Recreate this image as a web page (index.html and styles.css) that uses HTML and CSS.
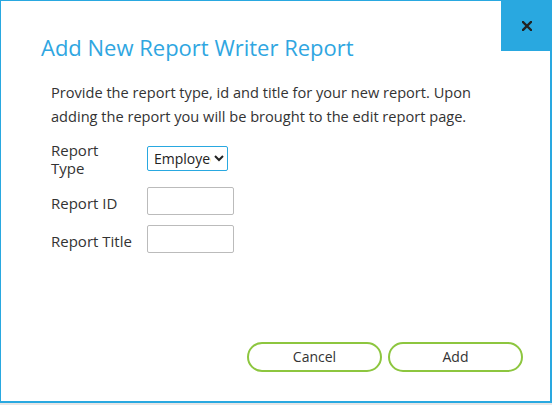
FILE: index.html
```html
<!DOCTYPE html>
<html lang="en">

<head>
    <meta charset="UTF-8">
    <title>Add New Report Writer Report</title>
    <link rel="stylesheet" href="styles.css">
</head>

<body>
    <div class="dialog">
        <a href="javascript:;" class="close">
            <svg width="10" height="10" viewBox="0 0 10 10">
                <path d="M1 1L9 9M9 1L1 9" stroke="#222" stroke-width="2.4" stroke-linecap="square" fill="none"/>
            </svg>
        </a>
        <h1 class="title">Add New Report Writer Report</h1>
        <div class="content">
            <p class="intro">Provide the report type, id and title for your new report. Upon adding the report you will be brought to the edit report page.</p>
            <div class="row row-type">
                <label class="label" for="type">Report Type</label>
                <select id="type" class="select">
                    <option>Employee</option>
                </select>
            </div>
            <div class="row">
                <label class="label" for="rid">Report ID</label>
                <input id="rid" class="input" type="text">
            </div>
            <div class="row">
                <label class="label" for="rtitle">Report Title</label>
                <input id="rtitle" class="input" type="text">
            </div>
        </div>
        <div class="footer">
            <a href="javascript:;" class="btn">Cancel</a>
            <a href="javascript:;" class="btn">Add</a>
        </div>
    </div>
</body>

</html>
```

FILE: styles.css
```css
* {
    margin: 0;
    padding: 0;
    box-sizing: border-box;
    text-decoration: none;
}

body {
    width: 552px;
    height: 405px;
    background-color: #e6e6e6;
    font-family: "Open Sans", "Liberation Sans", sans-serif;
    color: #333;
}

.dialog {
    position: relative;
    display: flex;
    flex-direction: column;
    width: 552px;
    height: 403px;
    background-color: #fff;
    border-top: 1px solid #29a8e0;
    border-left: 1px solid #29a8e0;
    border-right: 2px solid #29a8e0;
    border-bottom: 2px solid #29a8e0;
    padding: 0 27px 29px 40px;
}

.close {
    position: absolute;
    top: -1px;
    right: -2px;
    display: flex;
    align-items: center;
    justify-content: center;
    width: 51px;
    height: 51px;
    background-color: #29a8e0;
}

.title {
    margin-top: 31px;
    font-size: 22px;
    font-weight: normal;
    line-height: 30px;
    color: #2fa6e1;
}

.content {
    padding-left: 10px;
}

.intro {
    max-width: 430px;
    margin-top: 18px;
    font-size: 14.6px;
    line-height: 24px;
}

.row {
    display: flex;
    align-items: center;
    margin-top: 10px;
}

.row-type {
    margin-top: 9px;
}

.label {
    width: 96px;
    padding-top: 4px;
    font-size: 15px;
    line-height: 18px;
}

.row-type .label {
    width: 70px;
    margin-right: 26px;
}

.select {
    width: 81px;
    height: 25px;
    margin-top: 2px;
    border: 1px solid #29a8e0;
    border-radius: 2px;
    background-color: #fff;
    font-family: inherit;
    font-size: 14px;
    color: #222;
    padding-left: 2px;
}

.input {
    width: 87px;
    height: 28px;
    border: 1px solid #bbb;
    border-radius: 2px;
}

.footer {
    margin-top: auto;
    display: flex;
    justify-content: flex-end;
    gap: 6px;
}

.btn {
    width: 135px;
    height: 30px;
    border: 2px solid #8dc63f;
    border-radius: 15px;
    font-size: 14px;
    line-height: 26px;
    text-align: center;
    color: #333;
}
```
